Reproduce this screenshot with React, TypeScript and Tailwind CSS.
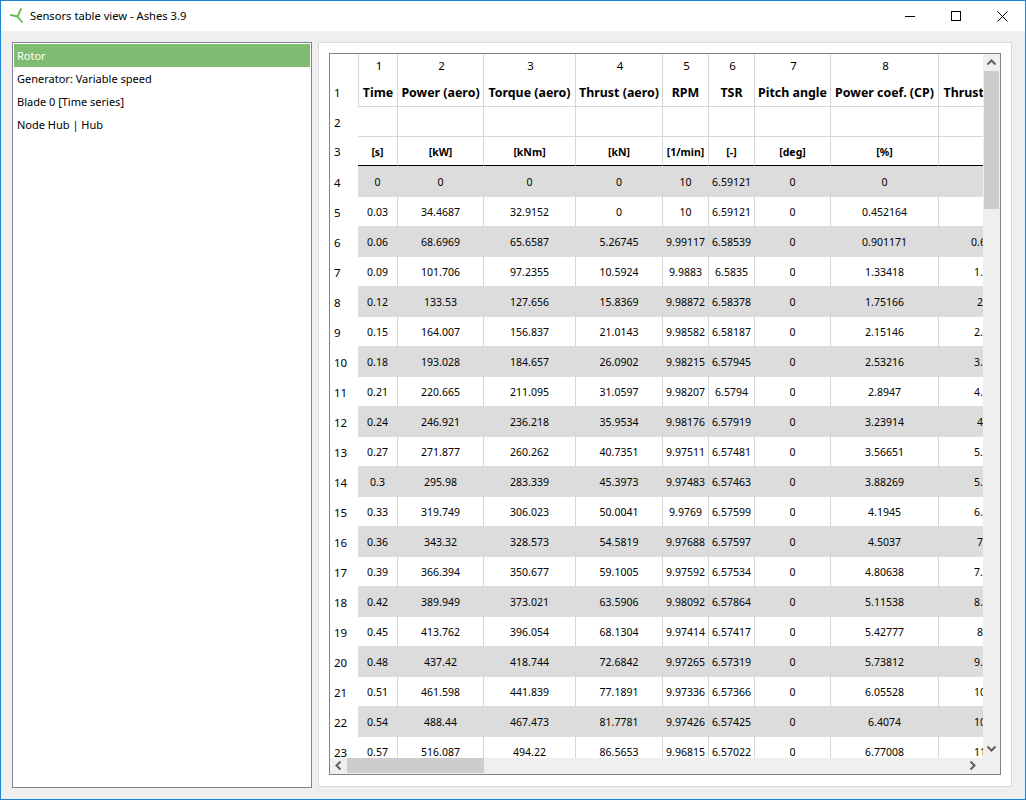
const cols = 'grid w-[719px] grid-cols-[28px_40px_86px_92px_87px_46px_46px_76px_108px_110px]';

const headers = ['Time', 'Power (aero)', 'Torque (aero)', 'Thrust (aero)', 'RPM', 'TSR', 'Pitch angle', 'Power coef. (CP)', 'Thrust coef. (CT)'];
const units = ['[s]', '[kW]', '[kNm]', '[kN]', '[1/min]', '[-]', '[deg]', '[%]', '[-]'];

const rows = [
  ['0', '0', '0', '0', '10', '6.59121', '0', '0', '0'],
  ['0.03', '34.4687', '32.9152', '0', '10', '6.59121', '0', '0.452164', '0'],
  ['0.06', '68.6969', '65.6587', '5.26745', '9.99117', '6.58539', '0', '0.901171', '0.691234'],
  ['0.09', '101.706', '97.2355', '10.5924', '9.9883', '6.5835', '0', '1.33418', '1.39012'],
  ['0.12', '133.53', '127.656', '15.8369', '9.98872', '6.58378', '0', '1.75166', '2.0781'],
  ['0.15', '164.007', '156.837', '21.0143', '9.98582', '6.58187', '0', '2.15146', '2.75756'],
  ['0.18', '193.028', '184.657', '26.0902', '9.98215', '6.57945', '0', '2.53216', '3.42362'],
  ['0.21', '220.665', '211.095', '31.0597', '9.98207', '6.5794', '0', '2.8947', '4.07574'],
  ['0.24', '246.921', '236.218', '35.9534', '9.98176', '6.57919', '0', '3.23914', '4.7179'],
  ['0.27', '271.877', '260.262', '40.7351', '9.97511', '6.57481', '0', '3.56651', '5.34536'],
  ['0.3', '295.98', '283.339', '45.3973', '9.97483', '6.57463', '0', '3.88269', '5.95714'],
  ['0.33', '319.749', '306.023', '50.0041', '9.9769', '6.57599', '0', '4.1945', '6.56166'],
  ['0.36', '343.32', '328.573', '54.5819', '9.97688', '6.57597', '0', '4.5037', '7.1623'],
  ['0.39', '366.394', '350.677', '59.1005', '9.97592', '6.57534', '0', '4.80638', '7.75522'],
  ['0.42', '389.949', '373.021', '63.5906', '9.98092', '6.57864', '0', '5.11538', '8.34436'],
  ['0.45', '413.762', '396.054', '68.1304', '9.97414', '6.57417', '0', '5.42777', '8.9401'],
  ['0.48', '437.42', '418.744', '72.6842', '9.97265', '6.57319', '0', '5.73812', '9.53764'],
  ['0.51', '461.598', '441.839', '77.1891', '9.97336', '6.57366', '0', '6.05528', '10.1288'],
  ['0.54', '488.44', '467.473', '81.7781', '9.97426', '6.57425', '0', '6.4074', '10.7309'],
  ['0.57', '516.087', '494.22', '86.5653', '9.96815', '6.57022', '0', '6.77008', '11.3591'],
];

const font = 'font-["Noto_Sans","Open_Sans",sans-serif]';

type HeaderRowProps = { index: string; height: string; labels: string[]; text: string; bottom: string; edge?: boolean };

function HeaderRow({ index, height, labels, text, bottom, edge }: HeaderRowProps) {
  return (
    <div className={`${cols} ${height}`}>
      <div className="flex items-center pl-1 pt-px text-[11.5px] text-black">{index}</div>
      {labels.map((label, i) => (
        <div
          key={i}
          className={`flex items-center justify-center overflow-hidden whitespace-nowrap border-r border-r-[#d6d6d6] text-black ${bottom} ${text} ${
            edge && i === 0 ? 'border-l border-l-[#d6d6d6]' : ''
          }`}
        >
          {label}
        </div>
      ))}
    </div>
  );
}

function ScrollArrow({ d }: { d: string }) {
  return (
    <svg width="11" height="11" viewBox="0 0 11 11" fill="none" stroke="#606060" strokeWidth="2">
      <path d={d} />
    </svg>
  );
}

export default function App() {
  return (
    <div className={`flex h-[800px] w-[1026px] flex-col overflow-hidden border border-[#1883d7] bg-white ${font}`}>
      {/* title bar */}
      <div className="flex h-[30px] shrink-0 items-center bg-white">
        <svg className="ml-[9px]" width="16" height="16" viewBox="0 0 16 16" fill="none" stroke="#62bd4a" strokeLinecap="round">
          <path d="M1 7 L7.5 8.5" strokeWidth="2" />
          <path d="M7.5 8.5 L11 1" strokeWidth="1.8" />
          <path d="M7.5 8.5 L12 14" strokeWidth="1.8" />
        </svg>
        <span className="ml-[4px] text-[11.2px] text-black">Sensors table view - Ashes 3.9</span>
        <div className="ml-auto flex items-center">
          <div className="flex h-[30px] w-[46px] items-center justify-center">
            <div className="h-px w-[10px] bg-black" />
          </div>
          <div className="flex h-[30px] w-[46px] items-center justify-center">
            <div className="size-[10px] border border-black" />
          </div>
          <div className="flex h-[30px] w-[46px] items-center justify-center">
            <svg width="11" height="11" viewBox="0 0 11 11" stroke="#000" strokeWidth="1">
              <path d="M0.5 0.5 L10.5 10.5 M10.5 0.5 L0.5 10.5" />
            </svg>
          </div>
        </div>
      </div>

      {/* body */}
      <div className="flex min-h-0 flex-1 items-start gap-[6px] bg-[#efefef] pl-[11px] pt-[11px]">
        <div className="h-[746px] w-[300px] shrink-0 border border-[#82828e] bg-white p-px text-[11px] text-black">
          <div className="flex h-[23px] items-center bg-[#80bb72] pl-[3px] pt-[2px] text-white">Rotor</div>
          <div className="flex h-[23px] items-center pl-[3px] pt-[2px]">Generator: Variable speed</div>
          <div className="flex h-[23px] items-center pl-[3px] pt-[2px]">Blade 0 [Time series]</div>
          <div className="flex h-[23px] items-center pl-[3px] pt-[2px]">Node Hub | Hub</div>
        </div>

        <div className="h-[745px] w-[694px] shrink-0 border border-[#d9d9d9] bg-white pl-[10px] pt-[10px]">
          <div className="flex h-[722px] w-[672px] flex-col border border-[#82828e] bg-[#efefef]">
            <div className="flex min-h-0 flex-1">
              <div className="w-[653px] overflow-hidden bg-white">
                <HeaderRow index="" height="h-[23px]" labels={['1', '2', '3', '4', '5', '6', '7', '8', '']} text="pl-[2px] text-[11.5px]" bottom="" edge />
                <HeaderRow index="1" height="h-[30px]" labels={headers} text="pt-[3px] text-[12.4px] font-bold" bottom="border-b border-b-[#d6d6d6]" edge />
                <HeaderRow index="2" height="h-[30px]" labels={headers.map(() => '')} text="" bottom="border-b border-b-[#d6d6d6]" />
                <HeaderRow index="3" height="h-[29px]" labels={units} text="pt-[4px] text-[10.5px] font-bold" bottom="border-b border-b-black" />
                {rows.map((row, r) => (
                  <div key={r} className={`${cols} ${r % 2 === 0 ? 'h-[31px]' : 'h-[29px]'}`}>
                    <div className={`flex items-center bg-white pl-1 text-[11.5px] text-black ${r % 2 === 0 ? 'pt-[3px]' : 'pt-[2px]'}`}>
                      {r + 4}
                    </div>
                    {row.map((value, c) => (
                      <div
                        key={c}
                        className={`flex items-center justify-center whitespace-nowrap border-r text-[10.5px] text-black ${
                          r % 2 === 0 ? 'border-[#d8d8d8] bg-[#dcdcdc] pt-[3px]' : 'border-[#d6d6d6] bg-white pt-[2px]'
                        }`}
                      >
                        {value}
                      </div>
                    ))}
                  </div>
                ))}
              </div>
              {/* vertical scrollbar */}
              <div className="flex w-[17px] flex-col items-center">
                <div className="flex h-[17px] items-center justify-center">
                  <ScrollArrow d="M1.5 7.5 L5.5 3.5 L9.5 7.5" />
                </div>
                <div className="h-[138px] w-[15px] bg-[#cdcdcd]" />
                <div className="mt-auto flex h-[17px] items-center justify-center pb-[2px]">
                  <ScrollArrow d="M1.5 3.5 L5.5 7.5 L9.5 3.5" />
                </div>
              </div>
            </div>
            {/* horizontal scrollbar */}
            <div className="flex h-[16px] shrink-0 items-start">
              <div className="flex h-[15px] w-[17px] items-center justify-center">
                <ScrollArrow d="M7.5 1.5 L3.5 5.5 L7.5 9.5" />
              </div>
              <div className="h-[15px] w-[137px] bg-[#cdcdcd]" />
              <div className="ml-auto mr-[19px] flex h-[15px] w-[17px] items-center justify-center">
                <ScrollArrow d="M3.5 1.5 L7.5 5.5 L3.5 9.5" />
              </div>
            </div>
          </div>
        </div>
      </div>
    </div>
  );
}
